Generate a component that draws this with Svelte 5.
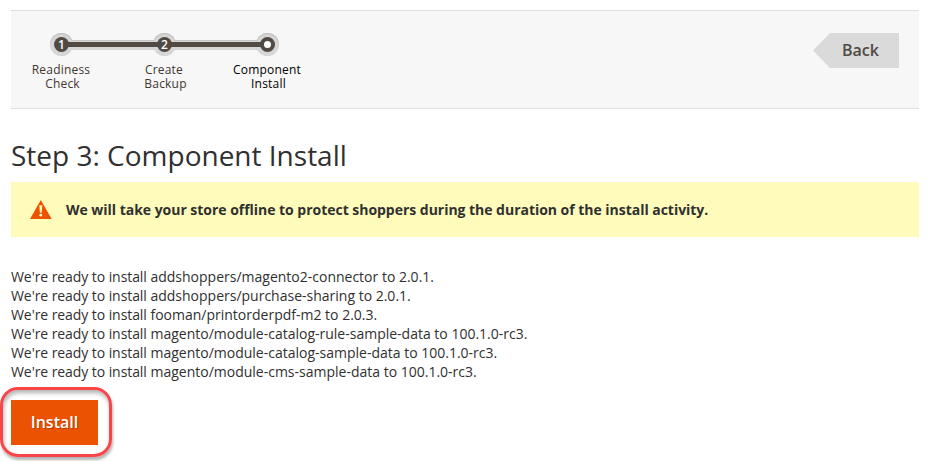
<script>
  const steps = [
    { mark: '1', lines: ['Readiness', 'Check'] },
    { mark: '2', lines: ['Create', 'Backup'] },
    { mark: '', lines: ['Component', 'Install'], active: true },
  ];
  const packages = [
    ['addshoppers/magento2-connector', '2.0.1'],
    ['addshoppers/purchase-sharing', '2.0.1'],
    ['fooman/printorderpdf-m2', '2.0.3'],
    ['magento/module-catalog-rule-sample-data', '100.1.0-rc3'],
    ['magento/module-catalog-sample-data', '100.1.0-rc3'],
    ['magento/module-cms-sample-data', '100.1.0-rc3'],
  ];
</script>

<main>
  <header>
    <ol class="steps">
      {#each steps as step}
        <li class:active={step.active}>
          <span class="node"><span class="dot">{step.mark}</span></span>
          <span class="label">
            <span>{step.lines[0]}</span>
            <span class="second">{step.lines[1]}</span>
          </span>
        </li>
      {/each}
    </ol>
    <button class="back">Back</button>
  </header>

  <h1>Step 3: Component Install</h1>

  <div class="notice">
    <svg width="22" height="19" viewBox="0 0 22 19" aria-hidden="true">
      <path d="M10.8 0 21.7 19H0Z" fill="#eb5202" />
      <path d="M9.3 5.2h3l-.6 7.6H9.9Z" fill="#fffbbb" />
      <circle cx="10.8" cy="15.2" r="1.4" fill="#fffbbb" />
    </svg>
    <strong>We will take your store offline to protect shoppers during the duration of the install activity.</strong>
  </div>

  <ul class="packages">
    {#each packages as [name, version]}
      <li><span class="lead">We're ready to install</span> {name} to {version}.</li>
    {/each}
  </ul>

  <div class="action">
    <button class="install">Install</button>
    <span class="highlight"></span>
  </div>
</main>

<style>
  :global(body) { background: #fff; overflow: hidden; }
  main {
    box-sizing: border-box;
    height: 461px;
    padding: 10px 9px 0 11px;
    overflow: hidden;
    color: #303030;
    font-family: 'Open Sans', 'Noto Sans', sans-serif;
  }
  header {
    box-sizing: border-box;
    display: flex;
    justify-content: space-between;
    align-items: flex-start;
    height: 99px;
    padding: 22px 20px 0 0;
    background: #f7f7f7;
    border-top: 1px solid #e0e0e0;
    border-bottom: 1px solid #e0e0e0;
  }
  ol, ul { list-style: none; margin: 0; padding: 0; }
  .steps { display: flex; margin-left: -1px; }
  .steps li {
    position: relative;
    display: flex;
    flex-direction: column;
    align-items: center;
    width: 103px;
    color: #41362f;
  }
  .steps li.active { color: #000; }
  .steps li:not(:last-child)::before,
  .steps li:not(:last-child)::after {
    content: '';
    position: absolute;
    left: 51px;
    width: 103px;
  }
  .steps li::before { top: 7px; height: 10px; background: #d6d6d6; box-shadow: inset 0 1px #c4c4c4; }
  .steps li::after { top: 9px; height: 5px; background: #514943; z-index: 2; }
  .node {
    position: relative;
    display: flex;
    align-items: center;
    justify-content: center;
    width: 23px;
    height: 23px;
    border-radius: 50%;
    background: #d6d6d6;
    box-shadow: inset 0 1px 1px #bdbdbd;
  }
  .dot {
    position: relative;
    z-index: 3;
    width: 15px;
    height: 15px;
    border-radius: 50%;
    background: #514943;
    color: #fff;
    font-size: 12px;
    font-weight: 600;
    line-height: 15px;
    text-align: center;
  }
  .active .dot { box-sizing: border-box; border: 4px solid #514943; background: #fff; }
  .label {
    display: flex;
    flex-direction: column;
    align-items: center;
    margin: 7px 1px 0 0;
    font-size: 12px;
    letter-spacing: 0.2px;
    line-height: 14px;
    white-space: nowrap;
  }
  .second { padding-left: 3px; }
  button { border: 0; padding: 0; font-family: inherit; }
  .back {
    box-sizing: border-box;
    width: 86px;
    height: 35px;
    padding: 0 0 1px 9px;
    background: #dadada;
    color: #514943;
    clip-path: polygon(17px 0, 100% 0, 100% 100%, 17px 100%, 0 50%);
    font-size: 16px;
    font-weight: 600;
  }
  h1 { margin: 26px 0 7px; font-size: 28px; font-weight: 400; line-height: 40px; white-space: nowrap; }
  .notice {
    display: flex;
    align-items: center;
    gap: 14px;
    height: 55px;
    padding-left: 19px;
    background: #fffbbb;
    font-size: 14px;
    letter-spacing: -0.028px;
    white-space: nowrap;
  }
  .packages { margin-top: 30px; font-size: 14px; line-height: 19px; white-space: nowrap; }
  .lead { letter-spacing: -0.07px; }
  .action { position: relative; width: 87px; margin-top: 19px; }
  .install {
    display: block;
    box-sizing: border-box;
    width: 87px;
    height: 45px;
    padding-bottom: 2px;
    background: #eb5202;
    color: #fff;
    font-size: 16px;
    font-weight: 600;
    text-shadow: 1px 1px 0 rgba(0, 0, 0, 0.25);
  }
  .highlight {
    position: absolute;
    box-sizing: border-box;
    left: -11px;
    top: -13px;
    width: 112px;
    height: 70px;
    border: 3px solid #fb4448;
    border-radius: 18px;
    box-shadow: 1px 3px 3px rgba(0, 0, 0, 0.3), inset 1px 3px 4px rgba(0, 0, 0, 0.3);
    pointer-events: none;
  }
</style>
